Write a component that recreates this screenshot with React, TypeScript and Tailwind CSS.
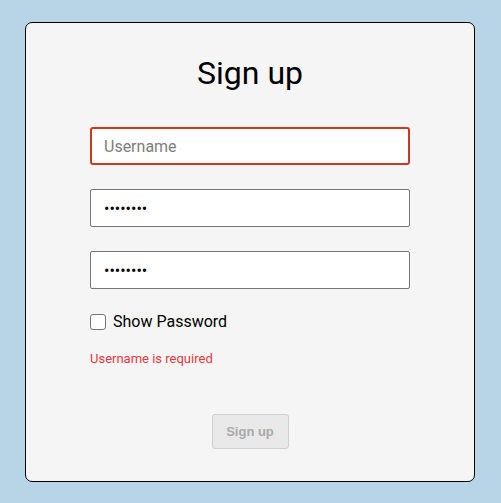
import React from "react";

export default function App() {
  return (
    <div className="w-[501px] h-[503px] bg-[#b8d5e7] pt-[22px] pl-[25px]" style={{ fontFamily: "Roboto, 'Liberation Sans', sans-serif" }}>
      <div className="w-[450px] h-[460px] bg-[#f5f5f5] border border-black rounded-[7px] flex flex-col items-center">
        <h1 className="text-[32px] leading-[38px] text-black mt-[31px] mb-[35px]">Sign up</h1>
        <div className="w-[320px] flex flex-col">
          <input
            className="w-[320px] h-[38px] border-2 border-[#c93a20] rounded-[3px] bg-white px-[12px] text-[16px] text-black outline-none placeholder:text-[#7d7d7d]"
            placeholder="Username"
          />
          <input
            type="password"
            defaultValue="password"
            className="mt-[24px] w-[320px] h-[38px] border border-[#767676] rounded-[2px] bg-white px-[13px] text-[16px] text-black outline-none"
          />
          <input
            type="password"
            defaultValue="password"
            className="mt-[24px] w-[320px] h-[38px] border border-[#767676] rounded-[2px] bg-white px-[13px] text-[16px] text-black outline-none"
          />
          <label className="mt-[23px] flex items-center text-[16px] text-black leading-[20px]">
            <span className="w-[16px] h-[16px] border border-[#767676] rounded-[3px] bg-white mr-[7px]" />
            Show Password
          </label>
          <p className="mt-[19px] text-[13px] leading-[16px] text-[#e8373f]">Username is required</p>
          <div className="flex justify-center mt-[47px]">
            <button
              disabled
              className="w-[77px] h-[35px] bg-[#e9e9e9] border border-[#cfcfcf] rounded-[3px] text-[13px] font-bold text-[#a9a9a9]"
              style={{ fontFamily: "'Liberation Sans', Arial, sans-serif" }}
            >
              Sign up
            </button>
          </div>
        </div>
      </div>
    </div>
  );
}
